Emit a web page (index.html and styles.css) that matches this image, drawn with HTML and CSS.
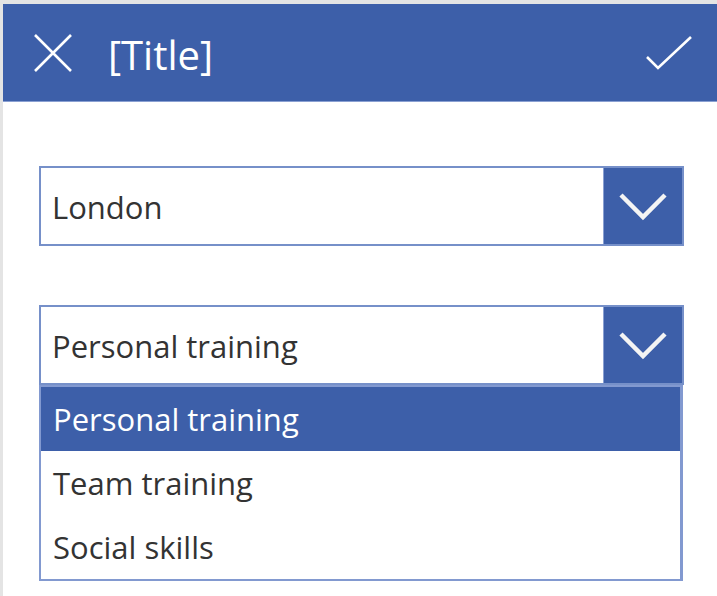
FILE: index.html
```html
<!doctype html>
<html lang="en">
<head>
  <meta charset="UTF-8">
  <title>[Title]</title>
  <link rel="stylesheet" href="styles.css">
</head>
<body>

<div class="screen">
  <div class="titlebar">
    <svg class="icon close" width="38" height="38" viewBox="0 0 38 38">
      <path d="M1 1 L37 37 M37 1 L1 37" />
    </svg>
    <span class="title">[Title]</span>
    <svg class="icon check" width="48" height="36" viewBox="0 0 48 36">
      <path d="M2 22 L13 33 L46 2" />
    </svg>
  </div>

  <div class="form">
    <div class="dropdown">
      <span class="value">London</span>
      <span class="chevron">
        <svg width="50" height="30" viewBox="0 0 50 30"><path d="M3 3 L25 25 L47 3" /></svg>
      </span>
    </div>

    <div class="dropdown open">
      <span class="value">Personal training</span>
      <span class="chevron">
        <svg width="50" height="30" viewBox="0 0 50 30"><path d="M3 3 L25 25 L47 3" /></svg>
      </span>
    </div>
    <ul class="options">
      <li class="selected">Personal training</li>
      <li>Team training</li>
      <li>Social skills</li>
    </ul>
  </div>
</div>

</body>
</html>
```

FILE: styles.css
```css
body {
  margin: 0;
  background: #e4e4e4;
  font-family: 'Open Sans', 'Noto Sans', sans-serif;
}

.screen {
  margin: 4px 0 0 3px;
  height: 592px;
  background: #fff;
}

.titlebar {
  display: flex;
  align-items: center;
  height: 97px;
  padding: 0 24px 0 31px;
  background: #3d5fa9;
  border-bottom: 1px solid #8aa0d2;
  color: #fff;
}

.icon path {
  fill: none;
  stroke: #fff;
  stroke-width: 2.6;
}

.title {
  flex: 1;
  margin-left: 36px;
  font-size: 40px;
  line-height: 1;
  padding-top: 5px;
}

.form {
  padding: 64px 33px 0 36px;
}

.dropdown {
  display: flex;
  height: 76px;
  border: 2px solid #7690c9;
  background: #fff;
}

.dropdown + .dropdown {
  margin-top: 59px;
}

.dropdown .value {
  flex: 1;
  display: flex;
  align-items: center;
  padding: 2px 0 0 11px;
  font-size: 31px;
  color: #333;
}

.chevron {
  display: flex;
  align-items: center;
  justify-content: center;
  width: 78px;
  background: #3d5fa9;
  border-left: 1px solid #8aa0d2;
}

.chevron svg {
  margin-top: 2px;
}

.chevron path {
  fill: none;
  stroke: #f4f4f4;
  stroke-width: 4.5;
}

.options {
  list-style: none;
  margin: 0 1px 0 0;
  padding: 0;
  border: 2px solid #8299d0;
  border-right-width: 3px;
}

.options li {
  display: flex;
  align-items: center;
  height: 64px;
  padding-left: 12px;
  font-size: 31px;
  color: #333;
}

.options li.selected {
  background: #3d5fa9;
  color: #fff;
}
```
